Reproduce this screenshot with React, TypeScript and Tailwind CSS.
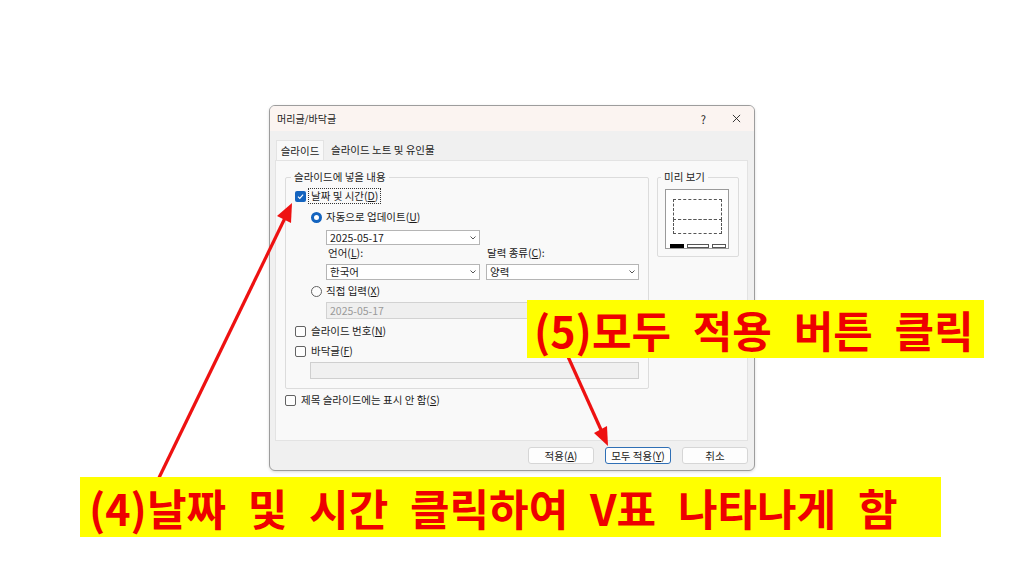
import React from 'react';

function Mn({ k }: { k: string }) {
  return (
    <>
      (<span className="underline underline-offset-1">{k}</span>)
    </>
  );
}

function Check({ checked = false }: { checked?: boolean }) {
  if (checked) {
    return (
      <span className="flex h-[11px] w-[11px] shrink-0 items-center justify-center rounded-[2px] bg-[#1464bf]">
        <svg viewBox="0 0 10 10" className="h-[9px] w-[9px]">
          <path d="M2.2 5.2 L4.2 7.1 L7.9 3" fill="none" stroke="#fff" strokeWidth="1.3" />
        </svg>
      </span>
    );
  }
  return <span className="h-[11px] w-[11px] shrink-0 rounded-[2px] border border-[#626262] bg-[#fdfdfd]" />;
}

function Radio({ on = false }: { on?: boolean }) {
  return on ? (
    <span className="h-[11px] w-[11px] shrink-0 rounded-full border-[3px] border-[#1464bf] bg-white" />
  ) : (
    <span className="h-[11px] w-[11px] shrink-0 rounded-full border border-[#626262] bg-[#fdfdfd]" />
  );
}

function Chevron() {
  return (
    <svg viewBox="0 0 6 4" className="h-[4px] w-[6px]">
      <path d="M0.5 0.5 L3 3 L5.5 0.5" fill="none" stroke="#555" strokeWidth="1" />
    </svg>
  );
}

function Select({ value, className }: { value: string; className: string }) {
  return (
    <div className={`flex items-center justify-between border border-[#b5b5b5] bg-white pl-[3px] pr-[3px] ${className}`}>
      <span>{value}</span>
      <Chevron />
    </div>
  );
}

function Button({ children, primary = false }: { children: React.ReactNode; primary?: boolean }) {
  return (
    <div
      className={`flex h-[17px] w-[66px] items-center justify-center rounded-[3px] bg-[#fdfdfd] ${
        primary ? 'border border-[#2f6fb5]' : 'border border-[#d6d6d6]'
      }`}
    >
      {children}
    </div>
  );
}

function Dialog() {
  return (
    <div className="flex h-[366px] w-[486px] flex-col overflow-hidden rounded-[6px] border border-[#9d9d9d] bg-[#f0f0f0] text-[10.5px] leading-[14px] text-[#1b1b1b] shadow-[0_1px_3px_rgba(0,0,0,0.15)]">
      {/* title bar */}
      <div className="flex h-[25px] shrink-0 items-center justify-between bg-[#fbf4f1] pl-[7px] pr-[13px]">
        <span className="text-[10px]">머리글/바닥글</span>
        <div className="flex items-center gap-[26px] text-[11px]">
          <span>?</span>
          <svg viewBox="0 0 10 10" className="h-[9px] w-[9px]">
            <path d="M1 1 L9 9 M9 1 L1 9" stroke="#222" strokeWidth="1" />
          </svg>
        </div>
      </div>

      {/* body */}
      <div className="flex flex-1 flex-col pl-[5px] pr-[6px]">
        {/* tabs */}
        <div className="mt-[9px] flex h-[20px] items-stretch">
          <div className="ml-[1px] flex w-[48px] items-center justify-center border-x border-t border-[#e3e3e3] bg-[#f9f9f9]">
            슬라이드
          </div>
          <div className="flex items-center pl-[7px]">슬라이드 노트 및 유인물</div>
        </div>

        {/* panel */}
        <div className="h-[281px] w-[473px] border border-[#e3e3e3] bg-[#f9f9f9]">
          <div className="ml-[9px] mt-[9px] flex items-start gap-[8px]">
            <fieldset className="w-[364px] rounded-[2px] border border-[#dcdcdc] pb-[9px]">
              <legend className="ml-[5px] px-[3px]">슬라이드에 넣을 내용</legend>

              <div className="mt-[4px] flex h-[16px] items-center pl-[9px]">
                <Check checked />
                <span className="ml-[2px] border border-dotted border-[#333] px-[2px] leading-[14px]">
                  날짜 및 시간<Mn k="D" />
                </span>
              </div>

              <div className="mt-[5px] flex h-[16px] items-center gap-[4px] pl-[25px]">
                <Radio on />
                <span>
                  자동으로 업데이트<Mn k="U" />
                </span>
              </div>

              <Select value="2025-05-17" className="ml-[40px] mt-[5px] h-[15px] w-[154px]" />

              <div className="mt-[1px] flex h-[14px] items-center pl-[42px]">
                <span className="w-[159px]">
                  언어<Mn k="L" />:
                </span>
                <span>
                  달력 종류<Mn k="C" />:
                </span>
              </div>

              <div className="ml-[40px] mt-[4px] flex gap-[6px]">
                <Select value="한국어" className="h-[16px] w-[154px]" />
                <Select value="양력" className="h-[16px] w-[153px]" />
              </div>

              <div className="mt-[3px] flex h-[16px] items-center gap-[4px] pl-[25px]">
                <Radio />
                <span>
                  직접 입력<Mn k="X" />
                </span>
              </div>

              <div className="ml-[40px] mt-[3px] flex h-[17px] w-[313px] items-center border border-[#d2d2d2] bg-[#efefef] pl-[3px] text-[#9a9a9a]">
                2025-05-17
              </div>

              <div className="mt-[4px] flex h-[16px] items-center gap-[5px] pl-[9px]">
                <Check />
                <span>
                  슬라이드 번호<Mn k="N" />
                </span>
              </div>

              <div className="mt-[4px] flex h-[16px] items-center gap-[5px] pl-[9px]">
                <Check />
                <span>
                  바닥글<Mn k="F" />
                </span>
              </div>

              <div className="ml-[24px] mt-[3px] h-[17px] w-[329px] border border-[#cfcfcf] bg-[#f0f0f0]" />
            </fieldset>

            <fieldset className="w-[82px] rounded-[2px] border border-[#dcdcdc] pb-[7px]">
              <legend className="ml-[3px] px-[3px]">미리 보기</legend>
              <div className="ml-[7px] mt-[5px] flex h-[60px] w-[64px] flex-col border border-[#9a9a9a] bg-white">
                <div className="ml-[7px] mt-[9px] h-[22px] w-[49px] border border-dashed border-[#555]" />
                <div className="-mt-px ml-[7px] h-[15px] w-[49px] border border-dashed border-[#555]" />
                <div className="ml-[4px] mt-[10px] flex gap-[3px]">
                  <div className="h-[4px] w-[14px] bg-black" />
                  <div className="h-[4px] w-[22px] border border-[#555]" />
                  <div className="h-[4px] w-[14px] border border-[#555]" />
                </div>
              </div>
            </fieldset>
          </div>

          <div className="ml-[9px] mt-[3px] flex h-[16px] items-center gap-[5px]">
            <Check />
            <span>
              제목 슬라이드에는 표시 안 함<Mn k="S" />
            </span>
          </div>
        </div>

        {/* buttons */}
        <div className="mt-[6px] flex justify-end gap-[11px]">
          <Button>
            적용<Mn k="A" />
          </Button>
          <Button primary>
            모두 적용<Mn k="Y" />
          </Button>
          <Button>취소</Button>
        </div>
      </div>
    </div>
  );
}

export default function App() {
  return (
    <div className="relative h-[576px] w-[1024px] overflow-hidden bg-white pl-[269px] pt-[105px] font-['Noto_Sans_CJK_KR','Noto_Sans',sans-serif]">
      <Dialog />

      {/* annotation arrows */}
      <svg className="pointer-events-none absolute left-0 top-0 h-[576px] w-[1024px]" viewBox="0 0 1024 576">
        <line x1="155" y1="486" x2="285" y2="218" stroke="#ee1111" strokeWidth="3.2" />
        <polygon points="292,203 291,223 277,216" fill="#ee1111" />
        <line x1="565" y1="350" x2="602" y2="432" stroke="#ee1111" strokeWidth="3.2" />
        <polygon points="608,446 607,426 594,433" fill="#ee1111" />
      </svg>

      <div className="absolute left-[527px] top-[300px] flex h-[58px] w-[457px] items-center bg-[#ffff00] pl-[7px] text-[43px] font-bold leading-none text-[#ee0000] [word-spacing:12px]">
        (5)모두 적용 버튼 클릭
      </div>

      <div className="absolute left-[80px] top-[477px] flex h-[60px] w-[861px] items-center bg-[#ffff00] pl-[9px] text-[43px] font-bold leading-none text-[#ee0000] [word-spacing:12px]">
        (4)날짜 및 시간 클릭하여 V표 나타나게 함
      </div>
    </div>
  );
}
